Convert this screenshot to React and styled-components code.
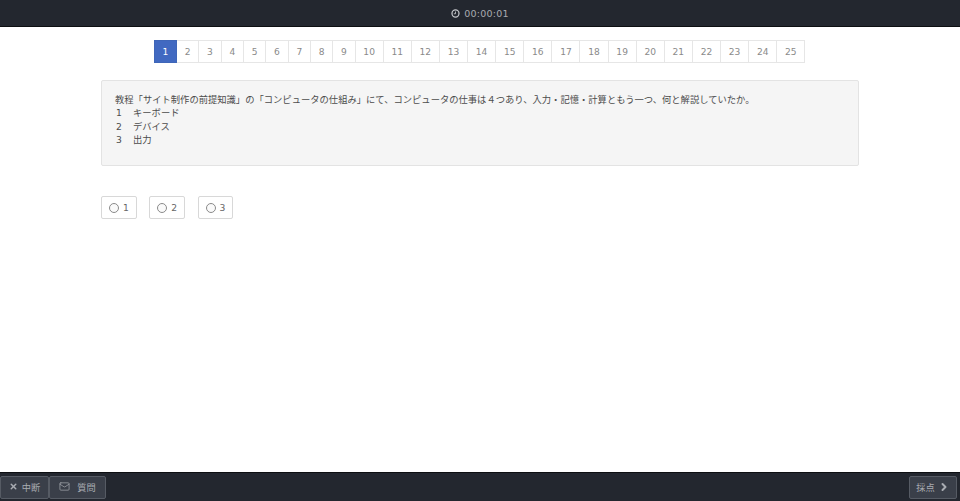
import React from "react";
import styled, { createGlobalStyle } from "styled-components";
import { ChevronRight, Mail, X } from "lucide-react";

const Global = createGlobalStyle`
  html, body { margin: 0; padding: 0; background: #fff; }
  body { font-family: "DejaVu Sans", "Noto Sans CJK JP", sans-serif; color: #555; }
`;

const Page = styled.div`
  width: 960px;
  height: 501px;
  display: flex;
  flex-direction: column;
  overflow: hidden;
`;

const Header = styled.header`
  height: 27px;
  box-sizing: border-box;
  flex: none;
  background: #23272f;
  border-bottom: 1px solid #0d0f12;
  display: flex;
  align-items: center;
  justify-content: center;
  gap: 4px;
  color: #a9abb0;
  font-size: 9.5px;
  letter-spacing: 0.25px;
`;

const Main = styled.main`
  flex: 1;
  padding: 13px 101px 0;
  display: flex;
  flex-direction: column;
`;

const Pager = styled.nav`
  display: flex;
  justify-content: center;
`;

const PageItem = styled.span`
  height: 23px;
  box-sizing: border-box;
  padding: 0 7.78px;
  margin-left: -1px;
  display: flex;
  align-items: center;
  font-size: 9.1px;
  border: 1px solid ${(p) => (p.$active ? "#3f66b8" : "#e6e6e6")};
  background: ${(p) => (p.$active ? "#4169c1" : "#fff")};
  color: ${(p) => (p.$active ? "#fff" : "#8a8a8a")};
  position: relative;
  z-index: ${(p) => (p.$active ? 1 : 0)};
`;

const Question = styled.section`
  margin-top: 17px;
  height: 86px;
  box-sizing: border-box;
  padding: 12px 13px 0;
  background: #f5f5f5;
  border: 1px solid #e3e3e3;
  border-radius: 2px;
  font-size: 9.3px;
  line-height: 13.4px;
  color: #4c4c4c;
  font-family: "Noto Sans CJK JP", sans-serif;
`;

const Line = styled.div`
  display: flex;
`;

const Num = styled.span`
  width: 18px;
  padding-left: 1px;
  box-sizing: border-box;
  font-family: "DejaVu Sans", sans-serif;
  font-size: 9.2px;
`;

const Choices = styled.div`
  margin-top: 30px;
  display: flex;
  gap: 12.8px;
`;

const Choice = styled.label`
  height: 23px;
  box-sizing: border-box;
  width: 35.5px;
  padding: 0 0 0 7px;
  display: flex;
  align-items: center;
  gap: 4px;
  border: 1px solid #d8d8d8;
  border-radius: 2px;
  font-size: 9.2px;
  color: #666;
  background: #fff;
`;

const Radio = styled.span`
  width: 8px;
  height: 8px;
  margin-top: 1px;
  border: 1px solid #8a8a8a;
  border-radius: 50%;
  background: #fafafa;
`;

const Footer = styled.footer`
  height: 29px;
  box-sizing: border-box;
  flex: none;
  background: #23272f;
  border-top: 1px solid #0d0f12;
  display: flex;
  justify-content: space-between;
  align-items: flex-start;
  padding: 3px 3px 0 0;
`;

const ButtonGroup = styled.div`
  display: flex;
`;

const FooterButton = styled.button`
  height: 23px;
  width: ${(p) => p.$w}px;
  padding: 0 0 2px;
  display: flex;
  align-items: center;
  justify-content: center;
  gap: ${(p) => p.$gap}px;
  background: #3a3f49;
  border: 1px solid #565b64;
  border-radius: 2px;
  color: #a9acb2;
  font-size: 9.2px;
  font-family: "Noto Sans CJK JP", sans-serif;
`;

const Clock = () => (
  <svg width="9" height="9" viewBox="0 0 10 10" fill="none" stroke="#c4c6ca">
    <circle cx="5" cy="5" r="3.9" strokeWidth="1.4" />
    <path d="M5 2.8V5.3H3.2" strokeWidth="1" />
  </svg>
);

const pages = Array.from({ length: 25 }, (_, i) => i + 1);

export default function App() {
  return (
    <Page>
      <Global />
      <Header>
        <Clock />
        <span>00:00:01</span>
      </Header>
      <Main>
        <Pager>
          {pages.map((n) => (
            <PageItem key={n} $active={n === 1}>{n}</PageItem>
          ))}
        </Pager>
        <Question>
          <div>教程「サイト制作の前提知識」の「コンピュータの仕組み」にて、コンピュータの仕事は４つあり、入力・記憶・計算ともう一つ、何と解説していたか。</div>
          <Line><Num>1</Num>キーボード</Line>
          <Line><Num>2</Num>デバイス</Line>
          <Line><Num>3</Num>出力</Line>
        </Question>
        <Choices>
          {[1, 2, 3].map((n) => (
            <Choice key={n}><Radio />{n}</Choice>
          ))}
        </Choices>
      </Main>
      <Footer>
        <ButtonGroup>
          <FooterButton $w={49} $gap={4}><X size={9} strokeWidth={4} />中断</FooterButton>
          <FooterButton $w={57} $gap={7}><Mail size={11} strokeWidth={1.5} />質問</FooterButton>
        </ButtonGroup>
        <FooterButton $w={48} $gap={3}>採点<ChevronRight size={12} strokeWidth={4} /></FooterButton>
      </Footer>
    </Page>
  );
}
